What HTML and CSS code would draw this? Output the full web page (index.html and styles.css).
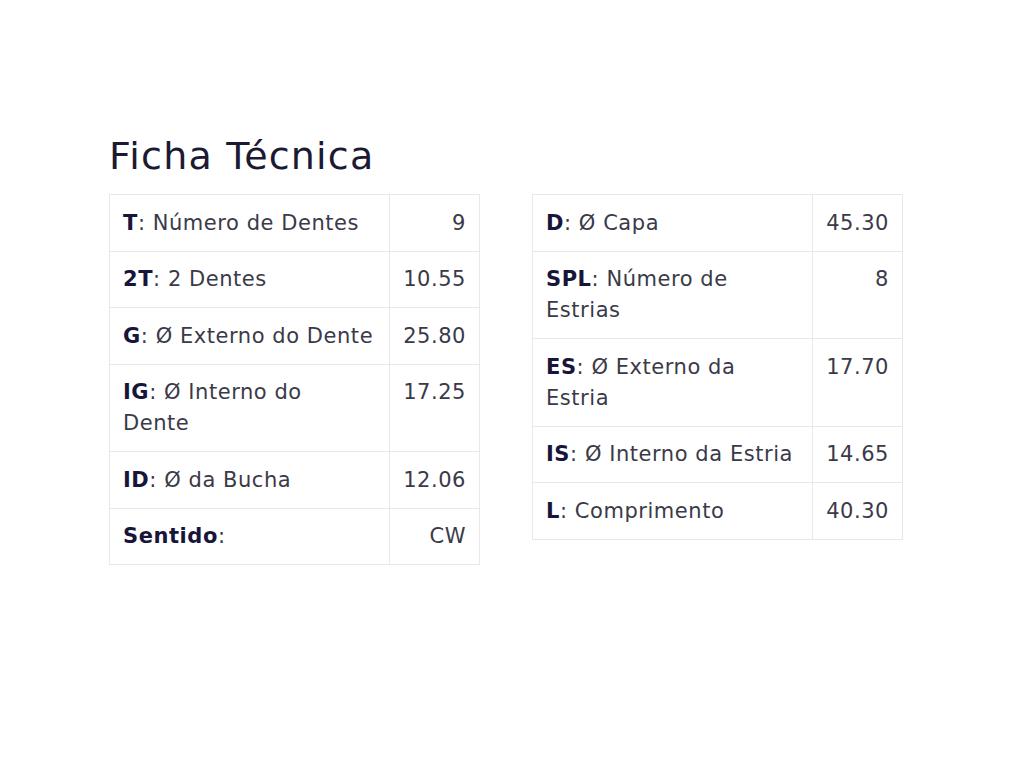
FILE: index.html
```html
<!DOCTYPE html>
<html lang="pt-BR">

<head>
  <meta charset="UTF-8">
  <title>Ficha Técnica</title>
  <link rel="stylesheet" href="styles.css">
</head>

<body>
  <div class="ficha">
    <h2 class="ficha-title">Ficha Técnica</h2>
    <div class="ficha-tables">
      <table class="ficha-table">
        <tr>
          <td class="ficha-label"><b>T</b>: Número de Dentes</td>
          <td class="ficha-value">9</td>
        </tr>
        <tr>
          <td class="ficha-label"><b>2T</b>: 2 Dentes</td>
          <td class="ficha-value">10.55</td>
        </tr>
        <tr>
          <td class="ficha-label"><b>G</b>: Ø Externo do Dente</td>
          <td class="ficha-value">25.80</td>
        </tr>
        <tr>
          <td class="ficha-label"><b>IG</b>: Ø Interno do<br>Dente</td>
          <td class="ficha-value">17.25</td>
        </tr>
        <tr>
          <td class="ficha-label"><b>ID</b>: Ø da Bucha</td>
          <td class="ficha-value">12.06</td>
        </tr>
        <tr>
          <td class="ficha-label"><b>Sentido</b>:</td>
          <td class="ficha-value">CW</td>
        </tr>
      </table>

      <table class="ficha-table">
        <tr>
          <td class="ficha-label"><b>D</b>: Ø Capa</td>
          <td class="ficha-value">45.30</td>
        </tr>
        <tr>
          <td class="ficha-label"><b>SPL</b>: Número de<br>Estrias</td>
          <td class="ficha-value">8</td>
        </tr>
        <tr>
          <td class="ficha-label"><b>ES</b>: Ø Externo da<br>Estria</td>
          <td class="ficha-value">17.70</td>
        </tr>
        <tr>
          <td class="ficha-label"><b>IS</b>: Ø Interno da Estria</td>
          <td class="ficha-value">14.65</td>
        </tr>
        <tr>
          <td class="ficha-label"><b>L</b>: Comprimento</td>
          <td class="ficha-value">40.30</td>
        </tr>
      </table>
    </div>
  </div>
</body>

</html>
```

FILE: styles.css
```css
body {
  margin: 0;
  background-color: #fff;
  font-family: "DejaVu Sans", "Inter", sans-serif;
  color: #3a3a48;
}

.ficha {
  padding: 132px 0 0 109px;
}

.ficha-title {
  margin: 0 0 14px;
  font-size: 38px;
  font-weight: 400;
  line-height: 48px;
  letter-spacing: 1.2px;
  color: #1c1a33;
}

.ficha-tables {
  display: flex;
  align-items: flex-start;
  gap: 52px;
}

.ficha-table {
  width: 371px;
  table-layout: fixed;
  border-collapse: collapse;
  font-size: 21px;
  line-height: 31px;
  letter-spacing: 0.55px;
}

.ficha-table td {
  border: 1px solid #e8e8ea;
  padding: 12.5px 13px 12px;
  vertical-align: top;
}

.ficha-table b {
  font-weight: 700;
  color: #17163a;
}

.ficha-label {
  white-space: nowrap;
}

.ficha-value {
  width: 63px;
  text-align: right;
}
```
